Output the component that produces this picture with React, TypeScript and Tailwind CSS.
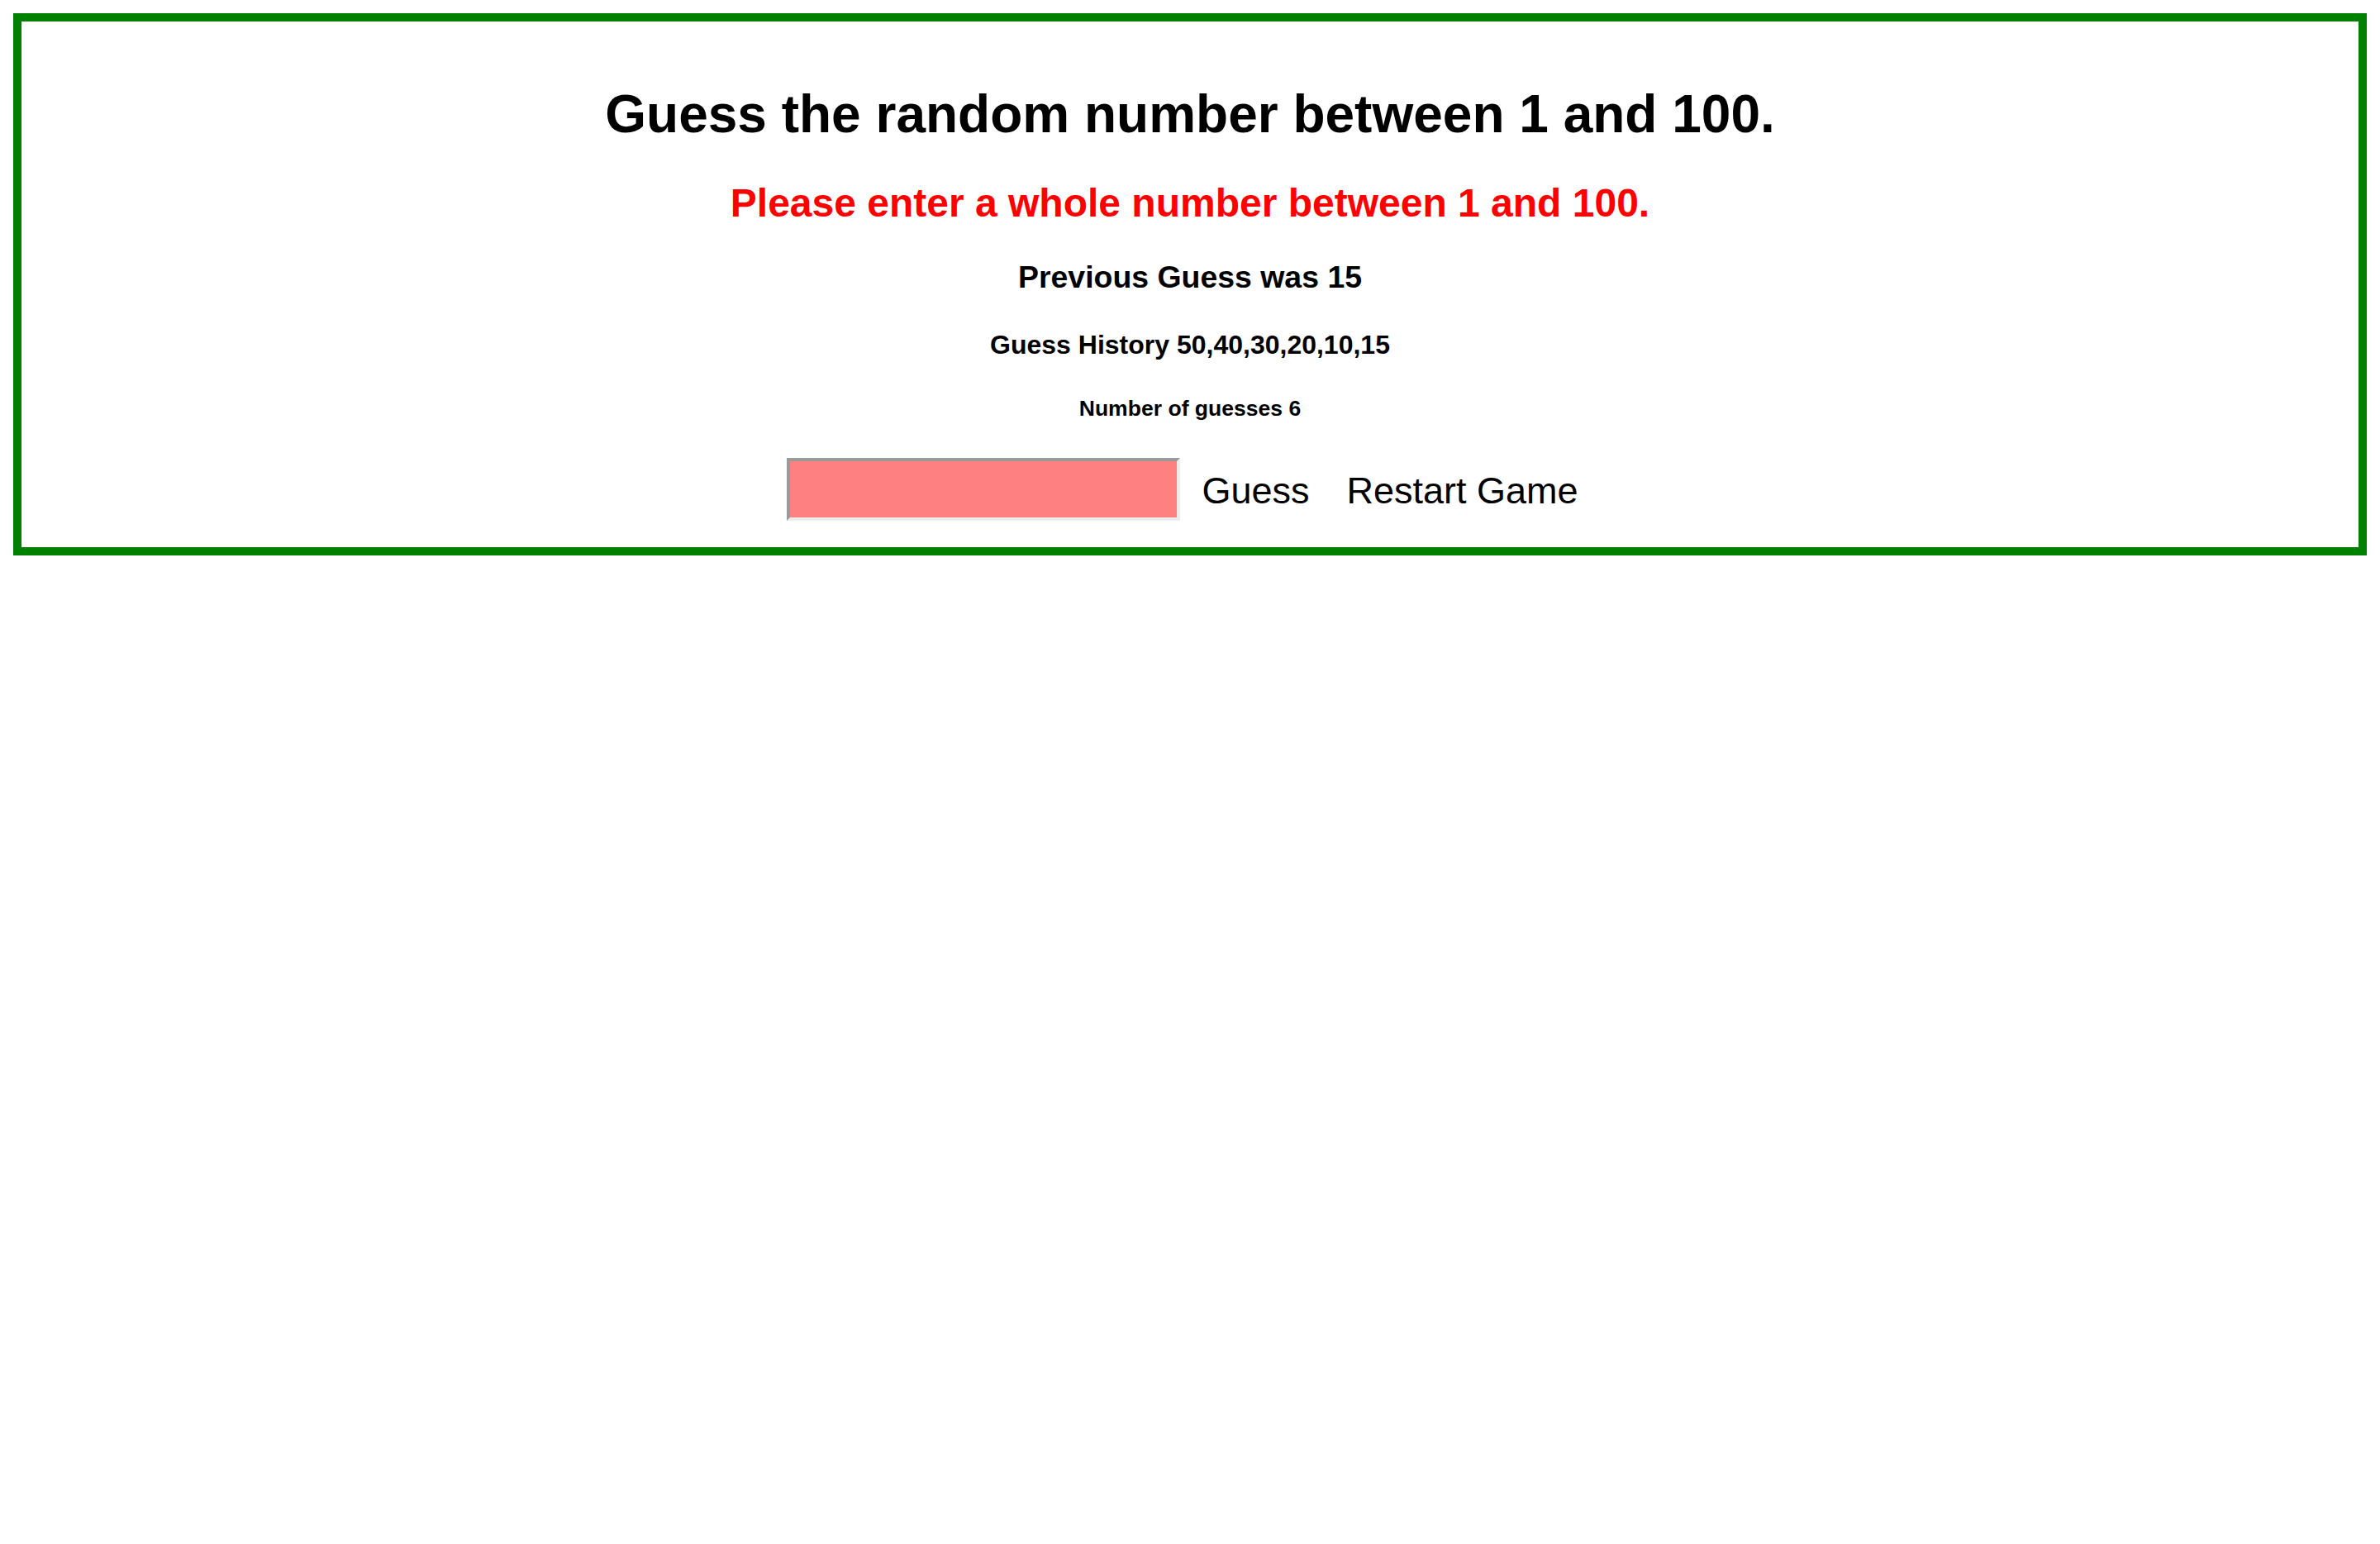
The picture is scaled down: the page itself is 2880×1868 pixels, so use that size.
import React, { useState } from 'react';

const App: React.FC = () => {
  const [guesses, setGuesses] = useState<number[]>([50, 40, 30, 20, 10, 15]);
  const [value, setValue] = useState('');

  const last = guesses[guesses.length - 1];

  const submit = () => {
    const n = Number(value);
    if (!Number.isInteger(n) || n < 1 || n > 100) return;
    setGuesses([...guesses, n]);
    setValue('');
  };

  return (
    <div className="min-h-screen bg-white pt-[16px] px-[16px] font-['Liberation_Sans',Arial,sans-serif] text-black">
      <div className="border-[10px] border-[#008000] p-[32px] text-center">
        <h1 className="mt-[42.88px] text-[64px] leading-[74px] font-bold">
          Guess the random number between 1 and 100.
        </h1>
        <h2 className="mt-[42.88px] text-[48px] leading-[55px] font-bold text-[#ff0000]">
          Please enter a whole number between 1 and 100.
        </h2>
        <h3 className="mt-[41px] text-[37.44px] leading-[43px] font-bold">
          Previous Guess was {last}
        </h3>
        <h4 className="mt-[42px] text-[32px] leading-[37px] font-bold">
          Guess History {guesses.join(',')}
        </h4>
        <h5 className="mt-[43.6px] text-[26.56px] leading-[31px] font-bold">
          Number of guesses {guesses.length}
        </h5>

        <div className="mt-[43.7px] flex items-start justify-center pr-[18px]">
          <input
            type="text"
            value={value}
            onChange={(e) => setValue(e.target.value)}
            className="w-[476px] h-[76px] border-[4px] border-t-[#9a9a9a] border-l-[#9a9a9a] border-b-[#ececec] border-r-[#ececec] bg-[#ff8080] px-2 text-[32px] outline-none"
          />
          <button
            onClick={submit}
            className="ml-[26px] mt-[14px] text-[45px] leading-[52px] bg-transparent"
          >
            Guess
          </button>
          <button
            onClick={() => {
              setGuesses([]);
              setValue('');
            }}
            className="ml-[45px] mt-[14px] text-[45px] leading-[52px] bg-transparent"
          >
            Restart Game
          </button>
        </div>
      </div>
    </div>
  );
};

export default App;
